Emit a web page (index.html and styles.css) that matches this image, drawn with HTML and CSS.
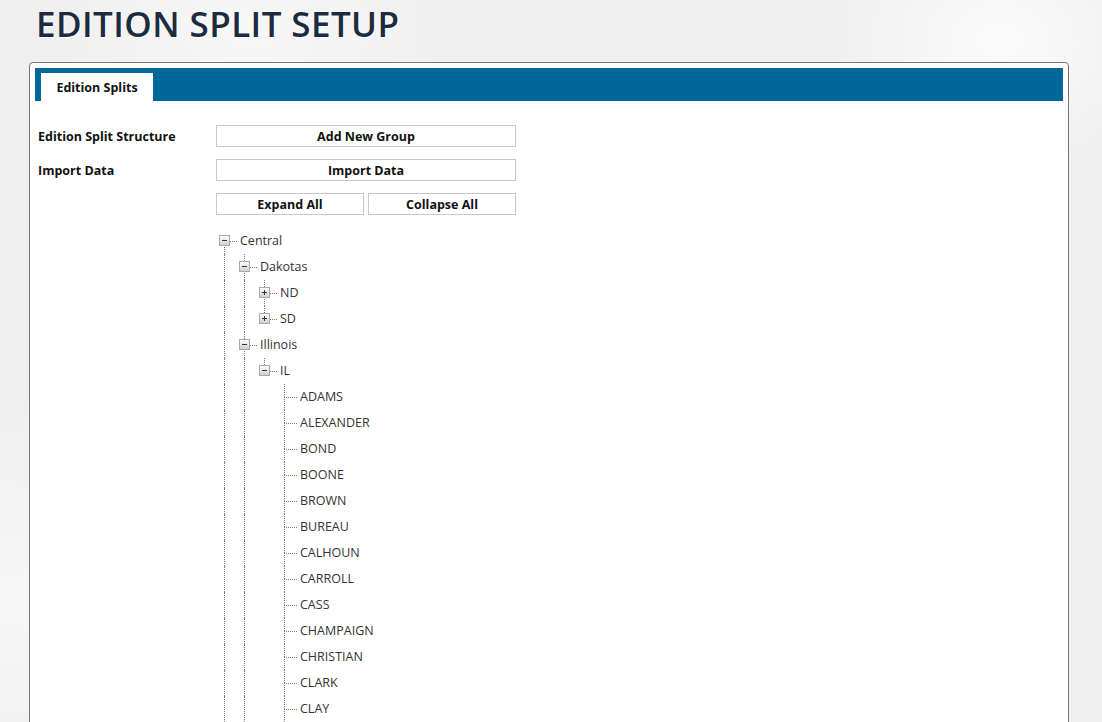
FILE: index.html
```html
<!DOCTYPE html>
<html>
<head>
<meta charset="utf-8">
<title>Edition Split Setup</title>
<link rel="stylesheet" href="styles.css">
</head>
<body>
<h1 class="title">EDITION SPLIT SETUP</h1>
<div class="panel">
  <div class="tabbar"><div class="tab">Edition Splits</div></div>
  <div class="content">
    <div class="form-row"><div class="label">Edition Split Structure</div><button class="btn wide">Add New Group</button></div>
    <div class="form-row"><div class="label">Import Data</div><button class="btn wide">Import Data</button></div>
    <div class="form-row"><div class="label"></div><div class="btn-pair"><button class="btn">Expand All</button><button class="btn">Collapse All</button></div></div>

    <div class="tree">
      <div class="node"><span class="cell node-cell down"><span class="hz"></span><span class="box minus"></span></span><span class="text">Central</span></div>
      <div class="node"><span class="cell line"></span><span class="cell node-cell up down"><span class="hz"></span><span class="box minus"></span></span><span class="text">Dakotas</span></div>
      <div class="node"><span class="cell line"></span><span class="cell line"></span><span class="cell node-cell up down"><span class="hz"></span><span class="box plus"></span></span><span class="text">ND</span></div>
      <div class="node"><span class="cell line"></span><span class="cell line"></span><span class="cell node-cell up"><span class="hz"></span><span class="box plus"></span></span><span class="text">SD</span></div>
      <div class="node"><span class="cell line"></span><span class="cell node-cell up down"><span class="hz"></span><span class="box minus"></span></span><span class="text">Illinois</span></div>
      <div class="node"><span class="cell line"></span><span class="cell line"></span><span class="cell node-cell up"><span class="hz"></span><span class="box minus"></span></span><span class="text">IL</span></div>
      <div class="node"><span class="cell line"></span><span class="cell line"></span><span class="cell"></span><span class="cell node-cell up down"><span class="hz"></span></span><span class="text">ADAMS</span></div>
      <div class="node"><span class="cell line"></span><span class="cell line"></span><span class="cell"></span><span class="cell node-cell up down"><span class="hz"></span></span><span class="text">ALEXANDER</span></div>
      <div class="node"><span class="cell line"></span><span class="cell line"></span><span class="cell"></span><span class="cell node-cell up down"><span class="hz"></span></span><span class="text">BOND</span></div>
      <div class="node"><span class="cell line"></span><span class="cell line"></span><span class="cell"></span><span class="cell node-cell up down"><span class="hz"></span></span><span class="text">BOONE</span></div>
      <div class="node"><span class="cell line"></span><span class="cell line"></span><span class="cell"></span><span class="cell node-cell up down"><span class="hz"></span></span><span class="text">BROWN</span></div>
      <div class="node"><span class="cell line"></span><span class="cell line"></span><span class="cell"></span><span class="cell node-cell up down"><span class="hz"></span></span><span class="text">BUREAU</span></div>
      <div class="node"><span class="cell line"></span><span class="cell line"></span><span class="cell"></span><span class="cell node-cell up down"><span class="hz"></span></span><span class="text">CALHOUN</span></div>
      <div class="node"><span class="cell line"></span><span class="cell line"></span><span class="cell"></span><span class="cell node-cell up down"><span class="hz"></span></span><span class="text">CARROLL</span></div>
      <div class="node"><span class="cell line"></span><span class="cell line"></span><span class="cell"></span><span class="cell node-cell up down"><span class="hz"></span></span><span class="text">CASS</span></div>
      <div class="node"><span class="cell line"></span><span class="cell line"></span><span class="cell"></span><span class="cell node-cell up down"><span class="hz"></span></span><span class="text">CHAMPAIGN</span></div>
      <div class="node"><span class="cell line"></span><span class="cell line"></span><span class="cell"></span><span class="cell node-cell up down"><span class="hz"></span></span><span class="text">CHRISTIAN</span></div>
      <div class="node"><span class="cell line"></span><span class="cell line"></span><span class="cell"></span><span class="cell node-cell up down"><span class="hz"></span></span><span class="text">CLARK</span></div>
      <div class="node"><span class="cell line"></span><span class="cell line"></span><span class="cell"></span><span class="cell node-cell up down"><span class="hz"></span></span><span class="text">CLAY</span></div>
      <div class="node"><span class="cell line"></span><span class="cell line"></span><span class="cell"></span><span class="cell line"></span></div>
    </div>
  </div>
</div>
</body>
</html>
```

FILE: styles.css
```css
html, body {
  margin: 0;
  padding: 0;
}
body {
  height: 722px;
  overflow: hidden;
  font-family: "Open Sans", "Noto Sans", sans-serif;
  background-color: #efefef;
  background-image:
    radial-gradient(ellipse 260px 200px at 1000px 40px, rgba(255,255,255,0.75), rgba(255,255,255,0) 70%),
    radial-gradient(ellipse 300px 240px at 250px 30px, rgba(255,255,255,0.5), rgba(255,255,255,0) 70%),
    radial-gradient(ellipse 200px 300px at 10px 600px, rgba(255,255,255,0.5), rgba(255,255,255,0) 70%);
}
.title {
  margin: 0;
  padding: 1px 0 0 36px;
  height: 60px;
  box-sizing: border-box;
  font-size: 35px;
  font-weight: 600;
  letter-spacing: 0.4px;
  color: #1c2b3e;
  text-shadow: 1px 1px 0 #ffffff;
  line-height: 46px;
}
.panel {
  margin: 2px 0 0 29px;
  width: 1040px;
  height: 800px;
  box-sizing: border-box;
  background: #ffffff;
  border: 1px solid #777777;
  border-radius: 4px 4px 0 0;
  padding: 5px;
}
.tabbar {
  background: #00679a;
  height: 33px;
  box-sizing: border-box;
  padding: 5px 0 0 6px;
  display: flex;
}
.tab {
  background: #ffffff;
  width: 112px;
  height: 28px;
  display: flex;
  align-items: center;
  justify-content: center;
  font-size: 12.5px;
  font-weight: 700;
  color: #111;
}
.content {
  padding: 24px 0 0 3px;
}
.form-row {
  display: flex;
  align-items: center;
  height: 22px;
  margin-bottom: 12px;
}
.label {
  width: 178px;
  font-size: 12.5px;
  font-weight: 700;
  color: #111;
}
.btn {
  font-family: inherit;
  font-size: 12.5px;
  font-weight: 700;
  color: #111;
  background: #ffffff;
  border: 1px solid #c8c8c8;
  height: 22px;
  padding: 0;
  margin: 0;
  box-sizing: border-box;
}
.wide {
  width: 300px;
}
.btn-pair {
  display: flex;
  gap: 4px;
  width: 300px;
}
.btn-pair .btn {
  flex: 1;
}
.tree {
  margin-top: 13px;
  margin-left: 176px;
}
.node {
  display: flex;
  height: 26px;
  align-items: center;
}
.cell {
  position: relative;
  width: 20px;
  height: 26px;
  flex: none;
}
.line::before {
  content: "";
  position: absolute;
  left: 10px;
  top: 0;
  bottom: 0;
  border-left: 1px dotted #7a7a7a;
}
.node-cell.up::before {
  content: "";
  position: absolute;
  left: 10px;
  top: 0;
  height: 13px;
  border-left: 1px dotted #7a7a7a;
}
.node-cell.down::after {
  content: "";
  position: absolute;
  left: 10px;
  top: 13px;
  bottom: 0;
  border-left: 1px dotted #7a7a7a;
}
.hz {
  position: absolute;
  left: 10px;
  width: 13px;
  top: 13px;
  border-top: 1px dotted #7a7a7a;
}
.box {
  position: absolute;
  left: 5px;
  top: 7px;
  width: 11px;
  height: 11px;
  box-sizing: border-box;
  border: 1px solid #a8a8a8;
  background: linear-gradient(#fdfdfd, #d0d0d0);
  z-index: 1;
}
.box::before {
  content: "";
  position: absolute;
  left: 2px;
  top: 4px;
  width: 5px;
  height: 1px;
  background: #333;
}
.box.plus::after {
  content: "";
  position: absolute;
  left: 4px;
  top: 2px;
  width: 1px;
  height: 5px;
  background: #333;
}
.text {
  padding-left: 6px;
  font-size: 12.5px;
  color: #333;
  line-height: 26px;
  white-space: nowrap;
}
```
